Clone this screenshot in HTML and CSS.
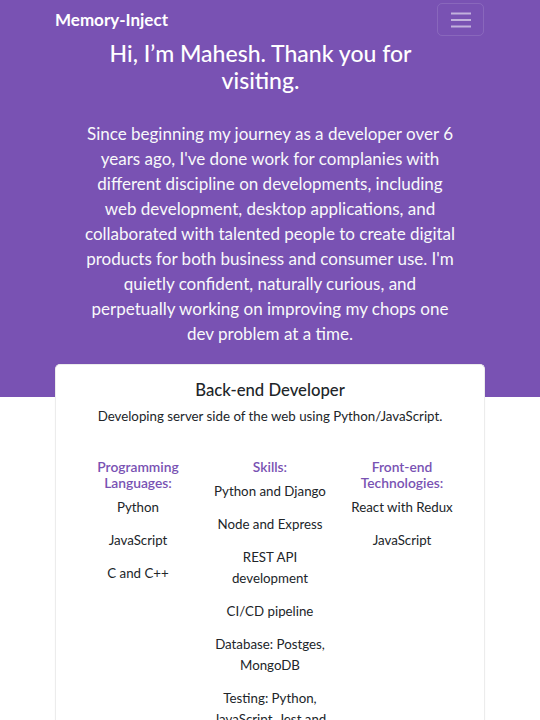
FILE: index.html
```html
<!DOCTYPE html>
<html lang="en">
<head>
<meta charset="utf-8">
<title>Memory-Inject</title>
<link rel="stylesheet" href="styles.css">
</head>
<body>
<header class="hero">
  <nav class="navbar">
    <a class="brand" href="#">Memory-Inject</a>
    <button class="toggler" aria-label="Toggle navigation">
      <svg width="24" height="16" viewBox="0 0 24 16"><path d="M2 1.5h20M2 8h20M2 14.5h20" stroke="rgba(255,255,255,0.55)" stroke-width="2" fill="none"/></svg>
    </button>
  </nav>
  <h1 class="hero-title">Hi, I’m Mahesh. Thank you for visiting.</h1>
  <p class="hero-text">Since beginning my journey as a developer over 6 years ago, I've done work for complanies with different discipline on developments, including web development, desktop applications, and collaborated with talented people to create digital products for both business and consumer use. I'm quietly confident, naturally curious, and perpetually working on improving my chops one dev problem at a time.</p>
</header>
<main class="content">
  <section class="card">
    <h2 class="card-title">Back-end Developer</h2>
    <p class="card-sub">Developing server side of the web using Python/JavaScript.</p>
    <div class="cols">
      <div class="col">
        <h3 class="col-head">Programming Languages:</h3>
        <p>Python</p>
        <p>JavaScript</p>
        <p>C and C++</p>
      </div>
      <div class="col">
        <h3 class="col-head">Skills:</h3>
        <p>Python and Django</p>
        <p>Node and Express</p>
        <p>REST API development</p>
        <p>CI/CD pipeline</p>
        <p>Database: Postges, MongoDB</p>
        <p>Testing: Python, JavaScript, Jest and Mocha</p>
      </div>
      <div class="col">
        <h3 class="col-head">Front-end Technologies:</h3>
        <p>React with Redux</p>
        <p>JavaScript</p>
      </div>
    </div>
  </section>
</main>
</body>
</html>
```

FILE: styles.css
```css
* { box-sizing: border-box; }
html, body { margin: 0; padding: 0; }
body {
  font-family: Lato, "Open Sans", "DejaVu Sans", sans-serif;
  color: #212529;
  background: #fff;
}
.hero {
  background: #7952b3;
  color: #fff;
  padding: 0 55px 51px;
}
.navbar {
  display: flex;
  justify-content: space-between;
  align-items: center;
  padding: 3px 0 3px;
  height: 39px;
}
.brand {
  color: #fff;
  text-decoration: none;
  font-weight: 700;
  font-size: 17px;
}
.toggler {
  width: 47px;
  height: 33px;
  margin-right: 1px;
  border: 1px solid rgba(255,255,255,0.12);
  border-radius: 5px;
  background: transparent;
  display: flex;
  align-items: center;
  justify-content: center;
  padding: 0;
}
.hero-title {
  margin: 1px 0 0;
  font-size: 23px;
  line-height: 27px;
  font-weight: 500;
  text-align: center;
  padding: 0 39px 0 20px;
}
.hero-text {
  margin: 27px auto 0;
  max-width: 372px;
  font-size: 17px;
  line-height: 25px;
  text-align: center;
  color: #f8f9fa;
}
.content {
  padding: 0 55px;
}
.card {
  margin-top: -33px;
  background: #fff;
  border: 1px solid #ececec;
  border-bottom: 0;
  border-radius: 5px 5px 0 0;
  box-shadow: 0 0 2px rgba(0,0,0,0.04);
  padding: 14px 16px 0;
  text-align: center;
}
.card-title {
  margin: 0;
  font-size: 16.7px;
  line-height: 22px;
  font-weight: 500;
}
.card-sub {
  margin: 5px 0 0;
  font-size: 13.3px;
  line-height: 21px;
}
.cols {
  display: grid;
  grid-template-columns: repeat(3, 1fr);
  margin-top: 32px;
}
.col {
  padding: 0 8px;
}
.col-head {
  margin: 0 0 6px;
  font-size: 13.8px;
  line-height: 16px;
  font-weight: 600;
  color: #7952b3;
}
.col p {
  margin: 0 0 12px;
  font-size: 13.3px;
  line-height: 21px;
}
.col-head + p {
  margin-top: 1px;
}
```
